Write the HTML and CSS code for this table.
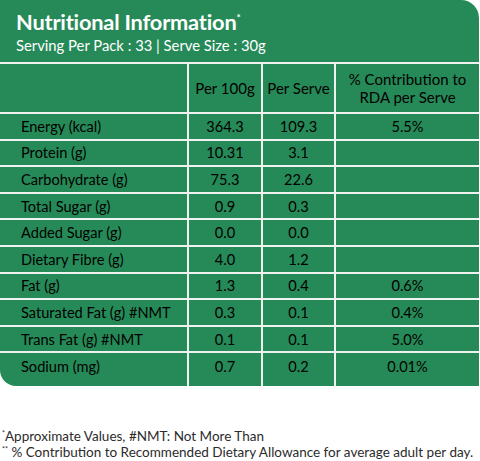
FILE: index.html
```html
<html>
<head>
  <link rel="stylesheet" href="styles.css">
</head>
<body>
  <div class="panel">
    <div class="heading">
      <h1>Nutritional Information<sup>*</sup></h1>
      <p>Serving Per Pack : 33 | Serve Size : 30g</p>
    </div>
    <table class="facts">
      <tr class="head">
        <th class="label"></th>
        <th class="c1">Per 100g</th>
        <th class="c2">Per Serve</th>
        <th class="c3">% Contribution to<br>RDA per Serve</th>
      </tr>
      <tr><td class="label">Energy (kcal)</td><td>364.3</td><td>109.3</td><td>5.5%</td></tr>
      <tr><td class="label">Protein (g)</td><td>10.31</td><td>3.1</td><td></td></tr>
      <tr><td class="label">Carbohydrate (g)</td><td>75.3</td><td>22.6</td><td></td></tr>
      <tr><td class="label">Total Sugar (g)</td><td>0.9</td><td>0.3</td><td></td></tr>
      <tr><td class="label">Added Sugar (g)</td><td>0.0</td><td>0.0</td><td></td></tr>
      <tr><td class="label">Dietary Fibre (g)</td><td>4.0</td><td>1.2</td><td></td></tr>
      <tr><td class="label">Fat (g)</td><td>1.3</td><td>0.4</td><td>0.6%</td></tr>
      <tr><td class="label">Saturated Fat (g) #NMT</td><td>0.3</td><td>0.1</td><td>0.4%</td></tr>
      <tr><td class="label">Trans Fat (g) #NMT</td><td>0.1</td><td>0.1</td><td>5.0%</td></tr>
      <tr class="last"><td class="label">Sodium (mg)</td><td>0.7</td><td>0.2</td><td>0.01%</td></tr>
    </table>
  </div>
  <div class="notes">
    <p><sup>*</sup>Approximate Values, #NMT: Not More Than</p>
    <p><sup>**</sup> % Contribution to Recommended Dietary Allowance for average adult per day.</p>
  </div>
</body>
</html>
```

FILE: styles.css
```css
body {
  margin: 0;
  background: #ffffff;
  font-family: "Lato", "Liberation Sans", sans-serif;
}

.panel {
  width: 479px;
  height: 386px;
  background-color: #268a58;
  border-radius: 0 18px 0 16px;
  color: #ffffff;
  overflow: hidden;
}

.heading {
  height: 62px;
  padding-left: 16px;
  box-sizing: border-box;
  padding-top: 11px;
}

.heading h1 {
  margin: 0;
  font-size: 21.8px;
  line-height: 22px;
  font-weight: 700;
  letter-spacing: -0.2px;
}

.heading h1 sup {
  font-size: 10px;
  vertical-align: 9px;
  line-height: 0;
}

.heading p {
  margin: 2px 0 0;
  font-size: 14.8px;
  line-height: 20px;
}

.facts {
  width: 479px;
  border-collapse: collapse;
  table-layout: fixed;
  font-size: 14.6px;
}

.facts th,
.facts td {
  border: 2px solid #eef3ef;
  padding: 0;
  text-align: center;
  font-weight: 400;
}

.facts tr {
  height: 26.6px;
}

.facts tr.head {
  height: 50px;
}

.facts tr.head th {
  line-height: 18px;
  font-size: 15px;
}

.facts .label {
  width: 166px;
  text-align: left;
  padding-left: 21px;
  border-left: none;
}

.facts .c1 { width: 72px; }
.facts .c2 { width: 71px; }

.facts tr > :last-child {
  border-right: none;
}

.facts tr.last {
  height: 34px;
}

.facts tr.last td {
  border-bottom: none;
  vertical-align: top;
  padding-top: 5px;
}

.notes {
  margin-top: 43px;
  padding-left: 2px;
  color: #2b2b2b;
  font-size: 13.5px;
}

.notes p {
  margin: 0;
  line-height: 15.5px;
}

.notes sup {
  font-size: 7px;
  vertical-align: 5px;
  line-height: 0;
}
```
